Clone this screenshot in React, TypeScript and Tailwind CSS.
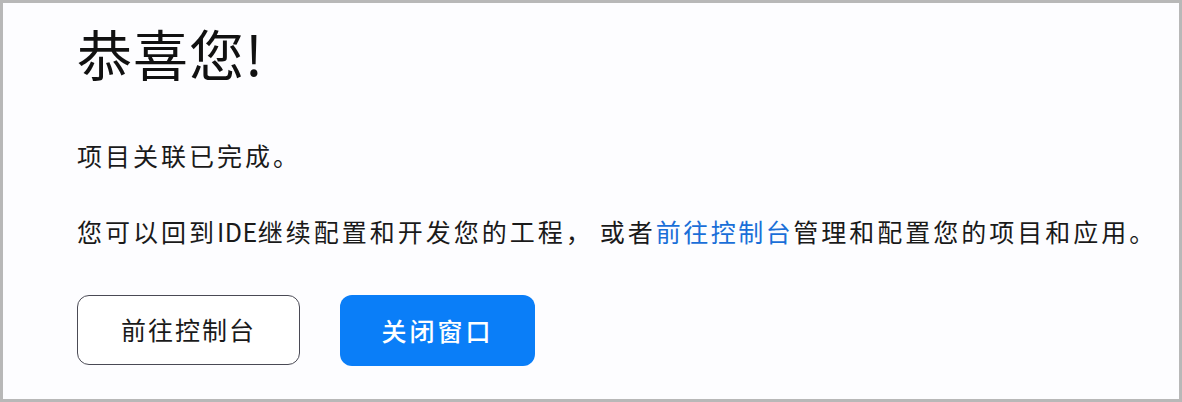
import React from 'react';

const App: React.FC = () => {
  return (
    <div className="w-[1182px] h-[402px] bg-[#b8b8b8] p-[3px]">
      <div
        className="w-full h-full bg-[#fdfdff] pl-[74px] pt-[19px] text-[#1a1a1a]"
        style={{ fontFamily: '"Noto Sans CJK SC", "Noto Sans", sans-serif' }}
      >
        <h1 className="text-[55px] leading-[60px] font-normal text-[#111] tracking-[1px]">恭喜您!</h1>
        <p className="mt-[56px] text-[25px] leading-[34px] tracking-[3px]">项目关联已完成。</p>
        <p className="mt-[42px] text-[25px] leading-[34px] tracking-[3px] whitespace-nowrap">
          您可以回到<span className="tracking-[0.5px]">IDE</span>继续配置和开发您的工程
          <span className="mr-[6px]">，</span>
          或者
          <a href="#" className="text-[#1a6fd8] tracking-[2.5px]">前往控制台</a>
          管理和配置您的项目和应用。
        </p>
        <div className="mt-[47px] flex gap-[40px]">
          <button
            type="button"
            className="w-[223px] h-[70px] rounded-[12px] border border-[#4a4a55] bg-white text-[25px] text-[#1a1a1a] tracking-[2px]"
          >
            前往控制台
          </button>
          <button
            type="button"
            className="w-[195px] h-[71px] rounded-[12px] bg-[#0a7ef8] text-[25px] text-white font-medium tracking-[3px]"
          >
            关闭窗口
          </button>
        </div>
      </div>
    </div>
  );
};

export default App;
